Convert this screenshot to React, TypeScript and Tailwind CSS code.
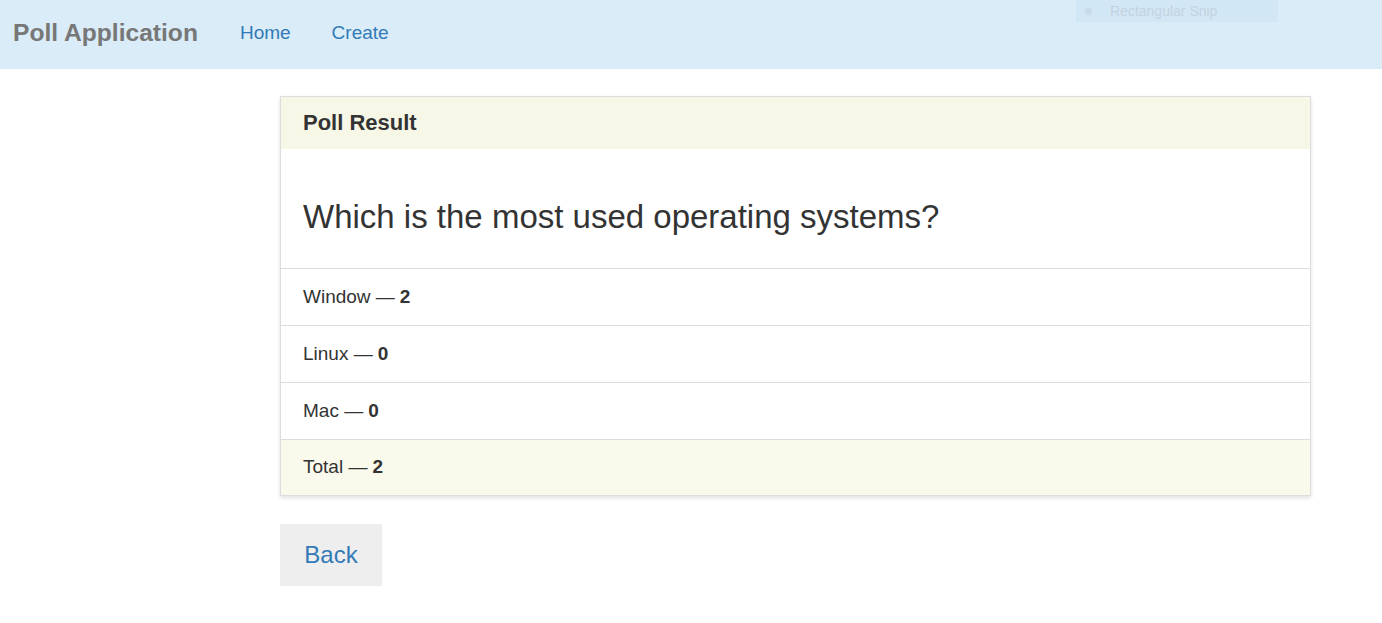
export default function App() {
  const options = [
    { label: "Window", votes: 2 },
    { label: "Linux", votes: 0 },
    { label: "Mac", votes: 0 },
  ];
  const total = options.reduce((s, o) => s + o.votes, 0);

  return (
    <div className="min-h-screen bg-white text-[#333] font-['Liberation_Sans',Arial,sans-serif]">
      <nav className="relative flex h-[69px] items-center bg-[#d9ecf7] px-[13px] pb-[3px]">
        <span className="text-[24.6px] font-bold text-[#777]">Poll Application</span>
        <a className="ml-[42px] text-[19px] text-[#337ab7]">Home</a>
        <a className="ml-[41px] text-[19px] text-[#337ab7]">Create</a>
        <div className="absolute left-[1076px] top-0 flex h-[22px] w-[202px] items-center bg-[#d2e7f6]">
          <span className="ml-[9px] h-[7px] w-[7px] rounded-full bg-[#c7dbe9]" />
          <span className="ml-[18px] text-[14px] text-[#c3d3de]">Rectangular Snip</span>
        </div>
      </nav>

      <main className="ml-[280px] w-[1031px] pt-[27px]">
        <div className="border border-[#ddd] shadow-[0_2px_4px_rgba(0,0,0,0.12)]">
          <div className="flex h-[52px] items-center bg-[#f7f7e7] px-[22px] pb-[2px] text-[22px] font-bold">
            Poll Result
          </div>
          <div className="flex h-[120px] items-center border-b border-[#ddd] px-[22px] pt-[16px] text-[33px]">
            Which is the most used operating systems?
          </div>
          {options.map((o) => (
            <div
              key={o.label}
              className="flex h-[57px] items-center border-b border-[#ddd] px-[22px] text-[19px]"
            >
              {o.label} — <b className="ml-[5px]">{o.votes}</b>
            </div>
          ))}
          <div className="flex h-[55px] items-center bg-[#f9f9ec] px-[22px] text-[19px]">
            Total — <b className="ml-[5px]">{total}</b>
          </div>
        </div>

        <button className="mt-[28px] h-[62px] w-[102px] bg-[#eee] text-[24px] text-[#337ab7]">
          Back
        </button>
      </main>
    </div>
  );
}
